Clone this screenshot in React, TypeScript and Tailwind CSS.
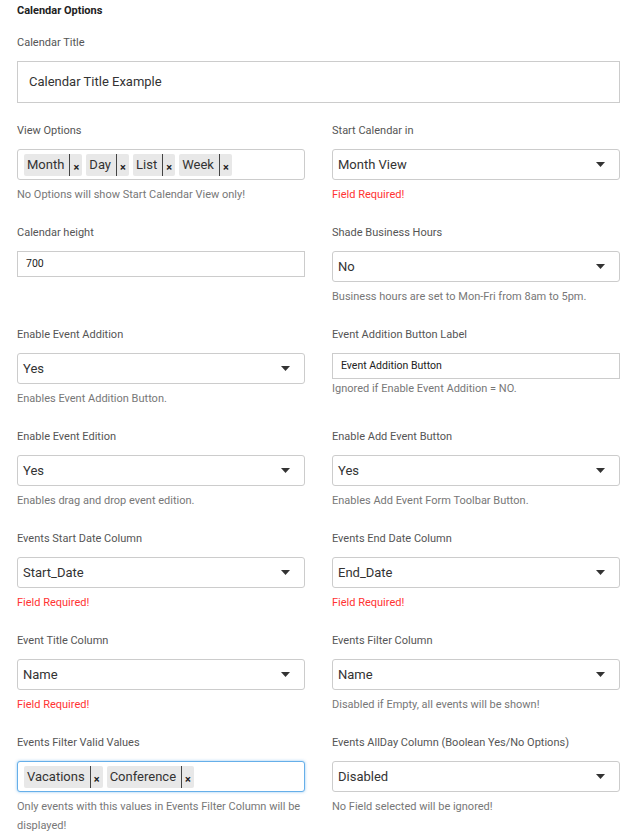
import React from "react";

type Opt = {
    label: string;
    kind: "select" | "tags" | "small";
    value?: string;
    tags?: string[];
    help?: string;
    error?: boolean;
    focused?: boolean;
};

const Caret = () => (
    <svg width="9" height="5" viewBox="0 0 9 5" className="shrink-0">
        <path d="M0 0 L9 0 L4.5 5 Z" fill="#333" />
    </svg>
);

function Tag({ text }: { text: string }) {
    return (
        <span className="flex h-[22px] items-stretch rounded-[2px] bg-[#e8e8e8] text-[13px] text-[#333]">
            <span className="flex items-center pl-[3px] pr-[5px]">{text}</span>
            <span className="flex w-[13px] items-end justify-center border-l border-[#444] pb-[3px] text-[11px] font-bold leading-none text-[#222]">
                ×
            </span>
        </span>
    );
}

function Field({ opt }: { opt: Opt }) {
    let control;
    if (opt.kind === "tags") {
        control = (
            <div
                className={
                    opt.focused
                        ? "flex h-[31px] items-center gap-[4px] rounded-[3px] border border-[#66afe9] bg-white px-[6px] shadow-[0_0_3px_rgba(102,175,233,0.7)]"
                        : "flex h-[31px] items-center gap-[4px] rounded-[3px] border border-[#ccc] bg-white px-[6px]"
                }
            >
                {opt.tags!.map((t) => (
                    <Tag key={t} text={t} />
                ))}
            </div>
        );
    } else if (opt.kind === "small") {
        control = (
            <div className="flex h-[26px] items-center border border-[#ccc] bg-white px-[8px] text-[10.5px] text-[#222]">
                {opt.value}
            </div>
        );
    } else {
        control = (
            <div className="flex h-[31px] items-center justify-between rounded-[3px] border border-[#ccc] bg-white pl-[5px] pr-[14px] text-[13px] text-[#333]">
                <span>{opt.value}</span>
                <Caret />
            </div>
        );
    }
    return (
        <div className="flex flex-col">
            <div className="h-[18px] text-[11px] leading-[18px] text-[#555]">{opt.label}</div>
            <div className="mt-[9px]">{control}</div>
            {opt.help && (
                <div
                    className={
                        (opt.kind === "small" ? "mt-0 " : "mt-[5px] ") +
                        (opt.error
                            ? "text-[11px] leading-[19px] text-[#f33]"
                            : "text-[11px] leading-[19px] text-[#777]")
                    }
                >
                    {opt.help}
                </div>
            )}
        </div>
    );
}

const rows: [Opt, Opt][] = [
    [
        { label: "View Options", kind: "tags", tags: ["Month", "Day", "List", "Week"], help: "No Options will show Start Calendar View only!" },
        { label: "Start Calendar in", kind: "select", value: "Month View", help: "Field Required!", error: true },
    ],
    [
        { label: "Calendar height", kind: "small", value: "700" },
        { label: "Shade Business Hours", kind: "select", value: "No", help: "Business hours are set to Mon-Fri from 8am to 5pm." },
    ],
    [
        { label: "Enable Event Addition", kind: "select", value: "Yes", help: "Enables Event Addition Button." },
        { label: "Event Addition Button Label", kind: "small", value: "Event Addition Button", help: "Ignored if Enable Event Addition = NO." },
    ],
    [
        { label: "Enable Event Edition", kind: "select", value: "Yes", help: "Enables drag and drop event edition." },
        { label: "Enable Add Event Button", kind: "select", value: "Yes", help: "Enables Add Event Form Toolbar Button." },
    ],
    [
        { label: "Events Start Date Column", kind: "select", value: "Start_Date", help: "Field Required!", error: true },
        { label: "Events End Date Column", kind: "select", value: "End_Date", help: "Field Required!", error: true },
    ],
    [
        { label: "Event Title Column", kind: "select", value: "Name", help: "Field Required!", error: true },
        { label: "Events Filter Column", kind: "select", value: "Name", help: "Disabled if Empty, all events will be shown!" },
    ],
    [
        {
            label: "Events Filter Valid Values",
            kind: "tags",
            tags: ["Vacations", "Conference"],
            focused: true,
            help: "Only events with this values in Events Filter Column will be displayed!",
        },
        { label: "Events AllDay Column (Boolean Yes/No Options)", kind: "select", value: "Disabled", help: "No Field selected will be ignored!" },
    ],
];

export default function App() {
    return (
        <div className="min-h-[840px] bg-white pl-[17px] pr-[15px] pt-[2px] font-['Roboto',sans-serif]">
            <div className="h-[18px] text-[11px] font-bold leading-[18px] text-[#222]">Calendar Options</div>
            <div className="mt-[14px] h-[88px]">
                <div className="h-[18px] text-[11px] leading-[18px] text-[#555]">Calendar Title</div>
                <div className="mt-[9px] flex h-[42px] items-center border border-[#ccc] bg-white px-[11px] text-[13px] text-[#333]">
                    Calendar Title Example
                </div>
            </div>
            {rows.map(([a, b], i) => (
                <div key={i} className="grid h-[102px] grid-cols-2 gap-x-[27px]">
                    <Field opt={a} />
                    <Field opt={b} />
                </div>
            ))}
        </div>
    );
}
